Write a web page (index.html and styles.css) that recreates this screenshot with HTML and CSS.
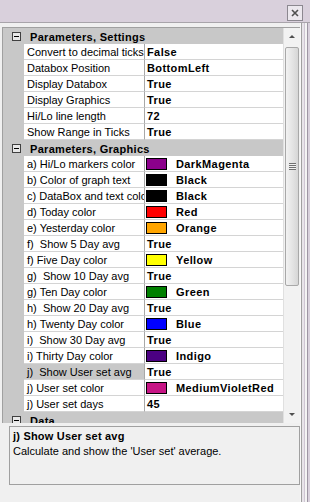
FILE: index.html
```html
<!DOCTYPE html>
<html lang="en">
<head>
  <meta charset="UTF-8">
  <title>Properties</title>
  <link rel="stylesheet" href="styles.css">
</head>
<body>

<div class="window">
  <!-- Title strip with close box -->
  <div class="titlebar">
    <span class="close">
      <svg width="16" height="16" viewBox="0 0 16 16">
        <rect x="0.5" y="0.5" width="15" height="15" fill="#ece8ee" stroke="#8c8890"/>
        <path d="M5 5 L11 11 M11 5 L5 11" stroke="#505050" stroke-width="1.6"/>
      </svg>
    </span>
  </div>

  <div class="pane">
    <div class="pane-main">
      <div class="grid">
        <div class="rows">
          <div class="row header"><span class="gutter"><span class="toggle"></span></span><span class="head-text">Parameters, Settings</span></div>
          <div class="row"><span class="gutter"></span><span class="label">Convert to decimal ticks</span><span class="value">False</span></div>
          <div class="row"><span class="gutter"></span><span class="label">Databox Position</span><span class="value">BottomLeft</span></div>
          <div class="row"><span class="gutter"></span><span class="label">Display Databox</span><span class="value">True</span></div>
          <div class="row"><span class="gutter"></span><span class="label">Display Graphics</span><span class="value">True</span></div>
          <div class="row"><span class="gutter"></span><span class="label">Hi/Lo line length</span><span class="value">72</span></div>
          <div class="row"><span class="gutter"></span><span class="label">Show Range in Ticks</span><span class="value">True</span></div>

          <div class="row header"><span class="gutter"><span class="toggle"></span></span><span class="head-text">Parameters, Graphics</span></div>
          <div class="row"><span class="gutter"></span><span class="label">a) Hi/Lo markers color</span><span class="value"><i class="swatch dark-magenta"></i>DarkMagenta</span></div>
          <div class="row"><span class="gutter"></span><span class="label">b) Color of graph text</span><span class="value"><i class="swatch black"></i>Black</span></div>
          <div class="row"><span class="gutter"></span><span class="label">c) DataBox and text color</span><span class="value"><i class="swatch black"></i>Black</span></div>
          <div class="row"><span class="gutter"></span><span class="label">d) Today color</span><span class="value"><i class="swatch red"></i>Red</span></div>
          <div class="row"><span class="gutter"></span><span class="label">e) Yesterday color</span><span class="value"><i class="swatch orange"></i>Orange</span></div>
          <div class="row"><span class="gutter"></span><span class="label">f)  Show 5 Day avg</span><span class="value">True</span></div>
          <div class="row"><span class="gutter"></span><span class="label">f) Five Day color</span><span class="value"><i class="swatch yellow"></i>Yellow</span></div>
          <div class="row"><span class="gutter"></span><span class="label">g)  Show 10 Day avg</span><span class="value">True</span></div>
          <div class="row"><span class="gutter"></span><span class="label">g) Ten Day color</span><span class="value"><i class="swatch green"></i>Green</span></div>
          <div class="row"><span class="gutter"></span><span class="label">h)  Show 20 Day avg</span><span class="value">True</span></div>
          <div class="row"><span class="gutter"></span><span class="label">h) Twenty Day color</span><span class="value"><i class="swatch blue"></i>Blue</span></div>
          <div class="row"><span class="gutter"></span><span class="label">i)  Show 30 Day avg</span><span class="value">True</span></div>
          <div class="row"><span class="gutter"></span><span class="label">i) Thirty Day color</span><span class="value"><i class="swatch indigo"></i>Indigo</span></div>
          <div class="row selected"><span class="gutter"></span><span class="label">j)  Show User set avg</span><span class="value">True</span></div>
          <div class="row"><span class="gutter"></span><span class="label">j) User set color</span><span class="value"><i class="swatch violet-red"></i>MediumVioletRed</span></div>
          <div class="row"><span class="gutter"></span><span class="label">j) User set days</span><span class="value">45</span></div>

          <div class="row header"><span class="gutter"><span class="toggle"></span></span><span class="head-text">Data</span></div>
        </div>

        <!-- Vertical scrollbar -->
        <div class="scrollbar">
          <div class="arrow up"></div>
          <div class="track">
            <div class="thumb"><span class="grip"></span></div>
          </div>
          <div class="arrow down"></div>
        </div>
      </div>

      <!-- Description panel -->
      <div class="help">
        <div class="help-title">j) Show User set avg</div>
        <div class="help-text">Calculate and show the 'User set' average.</div>
      </div>
    </div>
    <div class="edge"></div>
  </div>
</div>

</body>
</html>
```

FILE: styles.css
```css
/* Basic styles */
body {
  margin: 0;
  font-family: "Liberation Sans", Arial, sans-serif;
  font-size: 11px;
  color: #000;
}

.window {
  width: 310px;
  height: 502px;
  overflow: hidden;
  background: #f0f0f0;
  display: flex;
  flex-direction: column;
}

/* Title strip */
.titlebar {
  height: 23px;
  flex: none;
  background: #d9d0dc;
  border-bottom: 1px solid #a8a4aa;
  display: flex;
  justify-content: flex-end;
  align-items: flex-start;
  padding-right: 7px;
  padding-top: 5px;
  box-sizing: border-box;
}

.close svg {
  display: block;
}

.pane {
  flex: 1;
  display: flex;
}

.pane-main {
  width: 300px;
  padding: 4px 0 0 2px;
  box-sizing: border-box;
  background: #f0f0f0;
}

/* Right window edge */
.edge {
  width: 10px;
  background: linear-gradient(to right,
    #f8f8f8 0 1px,
    #a0a0a0 1px 2px,
    #e8e4ea 2px 4px,
    #cfc6d3 4px 5px,
    #f4f4f4 5px 7px,
    #9e96a4 7px 8px,
    #d8d0dc 8px 10px);
}

/* Property grid */
.grid {
  height: 396px;
  display: flex;
  border-top: 1px solid #a0a0a0;
  border-left: 1px solid #a0a0a0;
  box-sizing: border-box;
  background: #fff;
}

.rows {
  flex: 1;
  overflow: hidden;
}

.row {
  display: flex;
  height: 16px;
  line-height: 14px;
}

.gutter {
  width: 21px;
  flex: none;
  background: #c8c8c8;
  position: relative;
}

.label {
  width: 121px;
  flex: none;
  padding: 1px 0 0 3px;
  box-sizing: border-box;
  white-space: pre;
  overflow: hidden;
  border-right: 1px solid #a8a8a8;
  border-bottom: 1px solid #d4d4d4;
}

.value {
  flex: 1;
  padding: 1px 0 0 2px;
  font-weight: bold;
  letter-spacing: 0.4px;
  white-space: nowrap;
  overflow: hidden;
  border-bottom: 1px solid #d4d4d4;
  display: flex;
  align-items: center;
}

.selected .label {
  background: #c8c8c8;
}

/* Category header rows */
.header {
  background: #c8c8c8;
}

.head-text {
  padding: 2px 0 0 6px;
  font-weight: bold;
  letter-spacing: 0.3px;
}

.toggle {
  position: absolute;
  left: 9px;
  top: 4px;
  width: 7px;
  height: 7px;
  border: 1px solid #404040;
  background: #e8e8e8;
}

.toggle::after {
  content: "";
  position: absolute;
  left: 1px;
  top: 3px;
  width: 5px;
  height: 1px;
  background: #000;
}

/* Colour swatches */
.swatch {
  width: 19px;
  height: 10px;
  border: 1px solid #000;
  margin: -1px 9px 0 -1px;
  flex: none;
}

.dark-magenta { background: #8b008b; }
.black { background: #000; }
.red { background: #ff0000; }
.orange { background: #ffa500; }
.yellow { background: #ffff00; }
.green { background: #008000; }
.blue { background: #0000ff; }
.indigo { background: #4b0082; }
.violet-red { background: #c71585; }

/* Scrollbar */
.scrollbar {
  width: 17px;
  flex: none;
  display: flex;
  flex-direction: column;
  background: #f2f2f2;
  border-left: 1px solid #e0e0e0;
  box-sizing: border-box;
}

.arrow {
  height: 17px;
  flex: none;
  position: relative;
}

.arrow::after {
  content: "";
  position: absolute;
  left: 5px;
  border-left: 3px solid transparent;
  border-right: 3px solid transparent;
}

.arrow.up::after {
  top: 7px;
  border-bottom: 3px solid #505050;
}

.arrow.down::after {
  top: 7px;
  border-top: 3px solid #505050;
}

.track {
  flex: 1;
  padding-top: 2px;
}

.thumb {
  height: 237px;
  margin: 0 1px;
  border: 1px solid #a8a8a8;
  border-radius: 2px;
  background: linear-gradient(to right, #f2f2f2, #e2e2e2 60%, #d6d6d6);
  display: flex;
  justify-content: center;
  align-items: center;
}

.grip {
  width: 7px;
  height: 7px;
  background: repeating-linear-gradient(to bottom, #707070 0 1px, #f0f0f0 1px 2px);
}

/* Description panel */
.help {
  height: 59px;
  margin: 3px 0 0 7px;
  border: 1px solid #a0a0a0;
  box-sizing: border-box;
  padding: 2px 3px;
  line-height: 15px;
}

.help-title {
  font-weight: bold;
  letter-spacing: 0.2px;
}
```
